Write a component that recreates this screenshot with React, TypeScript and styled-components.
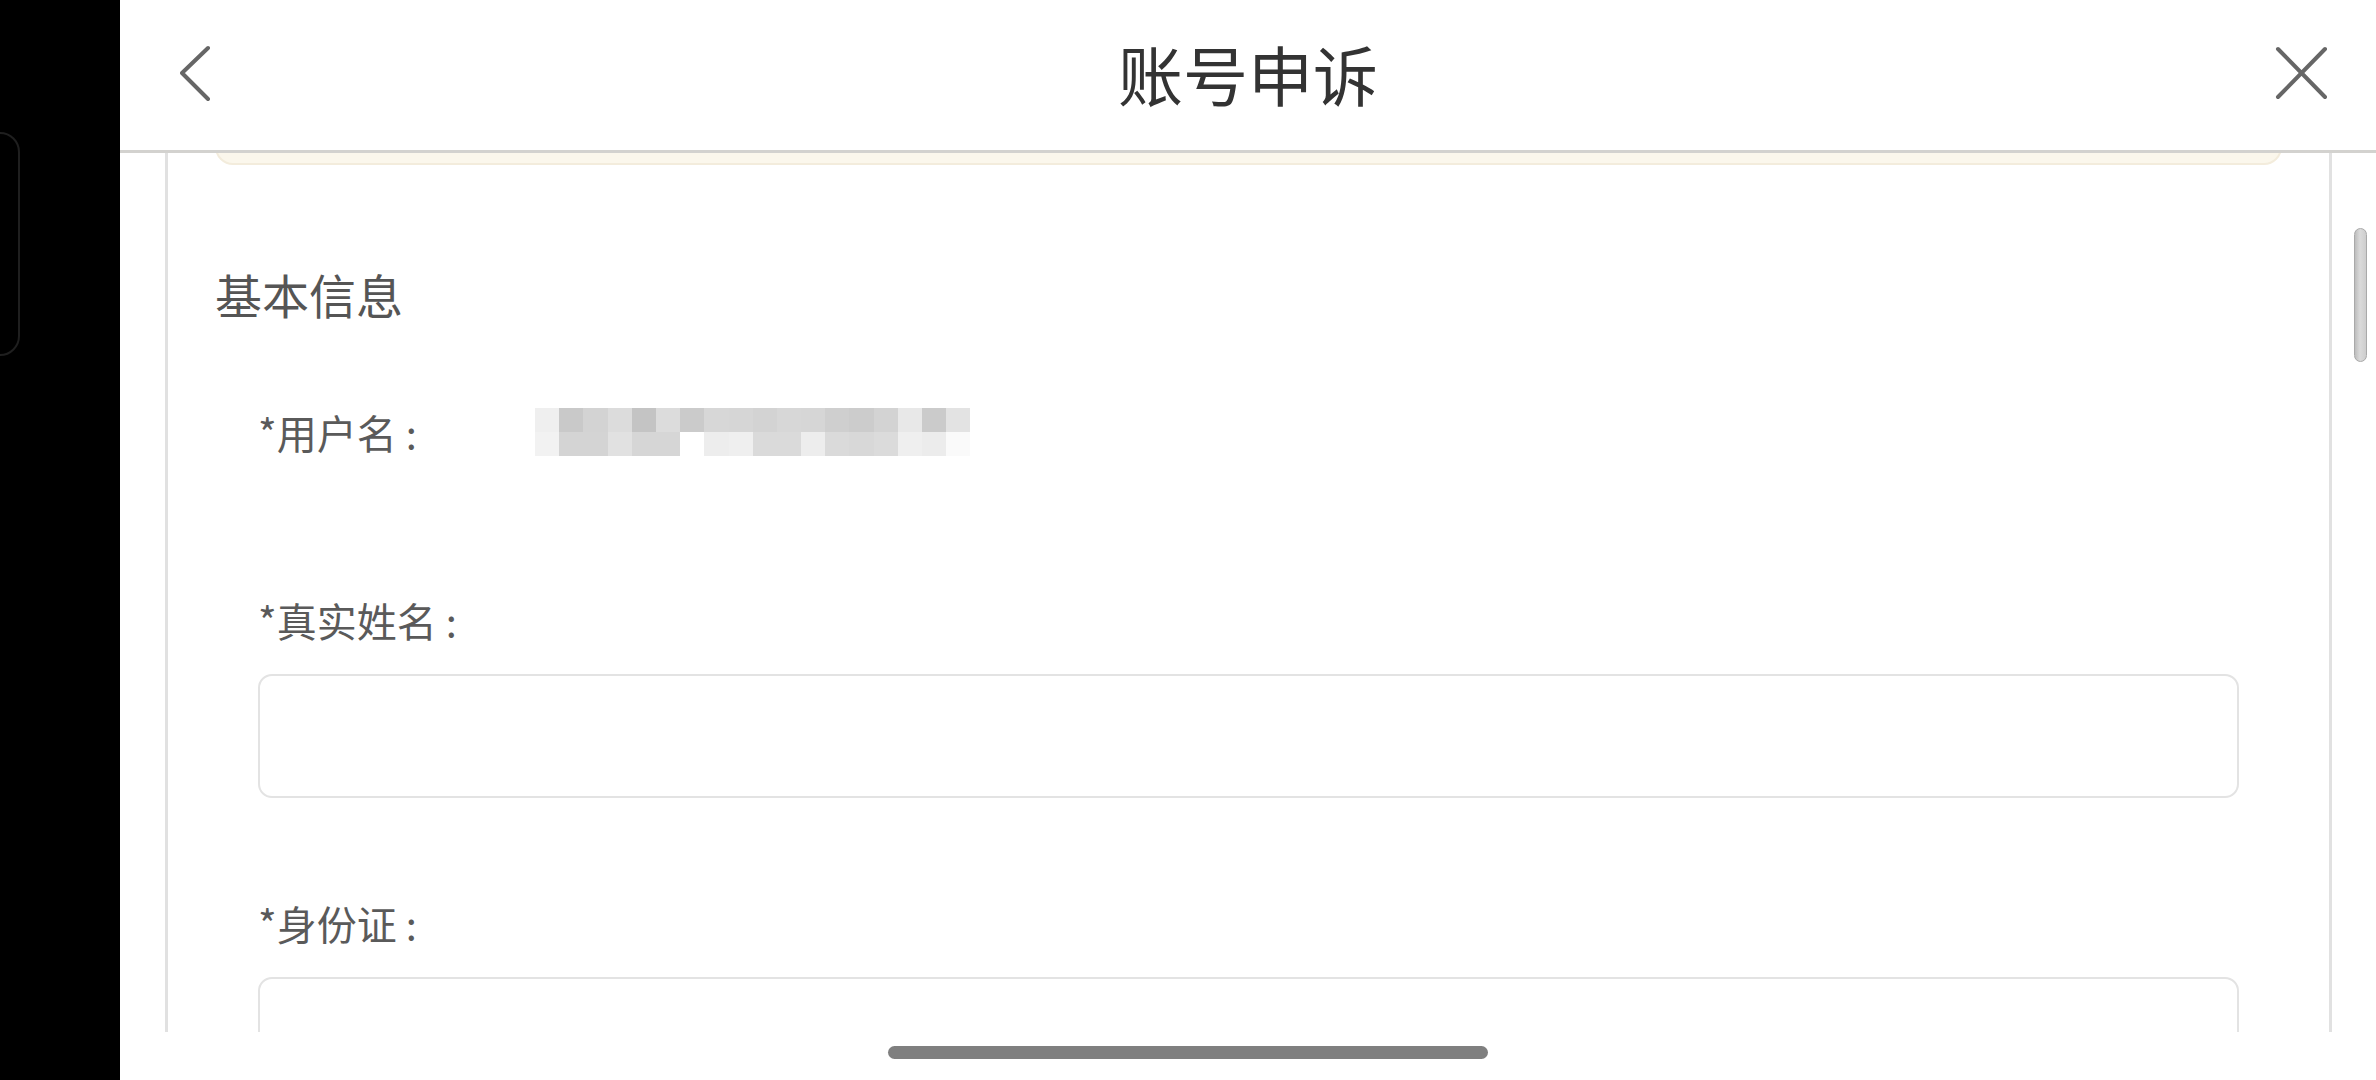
import React from "react";
import styled, { createGlobalStyle } from "styled-components";

const GlobalStyle = createGlobalStyle`
  html, body {
    margin: 0;
    padding: 0;
    background: #000;
  }
  body {
    font-family: "Noto Sans CJK SC", "Noto Sans", sans-serif;
  }
  * {
    box-sizing: border-box;
  }
`;

// pixelated username, two rows of grey blocks
const mosaic = [
  ["#efefef", "#c9c9c9", "#d3d3d3", "#dcdcdc", "#c4c4c4", "#dcdcdc", "#cbcbcb", "#d7d7d7", "#d6d6d6",
   "#d3d3d3", "#d7d7d7", "#d6d6d6", "#cfcfcf", "#cccccc", "#d3d3d3", "#e8e8e8", "#cbcbcb", "#e3e3e3"],
  ["#f2f2f2", "#d4d4d4", "#d4d4d4", "#e1e1e1", "#d6d6d6", "#d6d6d6", "#ffffff", "#ededed", "#efefef",
   "#dadada", "#dadada", "#ededed", "#dadada", "#d8d8d8", "#dbdbdb", "#efefef", "#ececec", "#fafafa"],
];

const fields = ["*真实姓名", "*身份证"];

const App: React.FC = () => {
  return (
    <Page>
      <GlobalStyle />
      <LeftRail>
        <RailHandle />
      </LeftRail>
      <Screen>
        <Header>
          <BackButton>
            <svg width="32" height="60" viewBox="0 0 32 60" fill="none">
              <path d="M28 5 L2 30 L28 56" stroke="#666" strokeWidth="4" strokeLinecap="round" strokeLinejoin="round" />
            </svg>
          </BackButton>
          <Title>账号申诉</Title>
          <CloseButton>
            <svg width="56" height="56" viewBox="0 0 56 56" fill="none">
              <path d="M4 4 L51 52 M51 4 L4 52" stroke="#666" strokeWidth="4" strokeLinecap="round" />
            </svg>
          </CloseButton>
        </Header>
        <Scroll>
          <Card>
            <Notice />
            <SectionTitle>基本信息</SectionTitle>
            <Fields>
              <InfoRow>
                <Label $inline>
                  *用户名<Colon>:</Colon>
                </Label>
                <Mosaic>
                  {mosaic.flat().map((c, i) => (
                    <Cell key={i} $color={c} />
                  ))}
                </Mosaic>
              </InfoRow>
              {fields.map((f) => (
                <Field key={f}>
                  <Label>
                    {f}
                    <Colon>:</Colon>
                  </Label>
                  <Input type="text" />
                </Field>
              ))}
            </Fields>
          </Card>
        </Scroll>
        <Footer />
      </Screen>
      <ScrollThumb />
      <HomeIndicator />
    </Page>
  );
};

export default App;

const Page = styled.div`
  position: relative;
  display: flex;
  width: 100vw;
  height: 100vh;
  overflow: hidden;
  background: #000;
`;

const LeftRail = styled.div`
  width: 120px;
  flex-shrink: 0;
  padding-top: 132px;
  background: #000;
`;

const RailHandle = styled.div`
  width: 40px;
  height: 224px;
  margin-left: -20px;
  border: 2px solid #1f1f1f;
  border-radius: 22px;
`;

const Screen = styled.div`
  flex: 1;
  display: flex;
  flex-direction: column;
  background: #fff;
  min-width: 0;
`;

const Header = styled.div`
  height: 153px;
  flex-shrink: 0;
  display: grid;
  grid-template-columns: 1fr auto 1fr;
  align-items: center;
  padding: 0 45px 4px;
  border-bottom: 3px solid #d3d2cf;
`;

const BackButton = styled.div`
  justify-self: start;
  display: flex;
  margin-left: 15px;
`;

const CloseButton = styled.div`
  justify-self: end;
  display: flex;
  margin-right: 1px;
`;

const Title = styled.h1`
  margin: 0;
  font-size: 65px;
  font-weight: 400;
  line-height: 1.2;
  color: #333;
`;

const Scroll = styled.div`
  flex: 1;
  min-height: 0;
  overflow: hidden;
`;

const Card = styled.div`
  margin: 0 44px 0 45px;
  min-height: 100%;
  border-left: 3px solid #e1e1e1;
  border-right: 3px solid #e1e1e1;
`;

const Notice = styled.div`
  height: 140px;
  margin: -128px 47px 0;
  background: #fbf7ec;
  border: 2px solid #f3ecdc;
  border-radius: 0 0 18px 18px;
`;

const SectionTitle = styled.h2`
  margin: 97px 0 0 47px;
  font-size: 47px;
  font-weight: 400;
  line-height: 64px;
  color: #555;
`;

const Fields = styled.div`
  padding: 0 90px;
`;

const InfoRow = styled.div`
  display: flex;
  align-items: center;
  height: 56px;
  margin-top: 78px;
`;

const Label = styled.div<{ $inline?: boolean }>`
  width: ${(p) => (p.$inline ? "277px" : "auto")};
  flex-shrink: 0;
  font-size: 40px;
  line-height: 56px;
  color: #5a5a5a;
`;

const Colon = styled.span`
  margin-left: 9px;
`;

const Mosaic = styled.div`
  display: grid;
  grid-template-columns: repeat(18, 24.2px);
  grid-auto-rows: 24px;
`;

const Cell = styled.span<{ $color: string }>`
  background: ${(p) => p.$color};
`;

const Field = styled.div`
  display: flex;
  flex-direction: column;
  gap: 26px;
  margin-top: 97px;

  ${InfoRow} + & {
    margin-top: 132px;
  }
`;

const Input = styled.input`
  width: 100%;
  height: 124px;
  padding: 0 30px;
  border: 2px solid #e3e3e3;
  border-radius: 14px;
  background: #fff;
  font: inherit;
  font-size: 40px;
  color: #333;
  outline: none;
`;

const Footer = styled.div`
  height: 48px;
  flex-shrink: 0;
  background: #fff;
`;

const ScrollThumb = styled.div`
  position: absolute;
  top: 228px;
  right: 9px;
  width: 13px;
  height: 134px;
  border: 1px solid #a9a9a9;
  border-radius: 7px;
  background: linear-gradient(90deg, #bdbdbd, #dadada 45%, #cdcdcd);
`;

const HomeIndicator = styled.div`
  position: absolute;
  left: 50%;
  bottom: 21px;
  width: 600px;
  height: 13px;
  margin-left: -300px;
  border-radius: 7px;
  background: #7f7f7f;
`;
